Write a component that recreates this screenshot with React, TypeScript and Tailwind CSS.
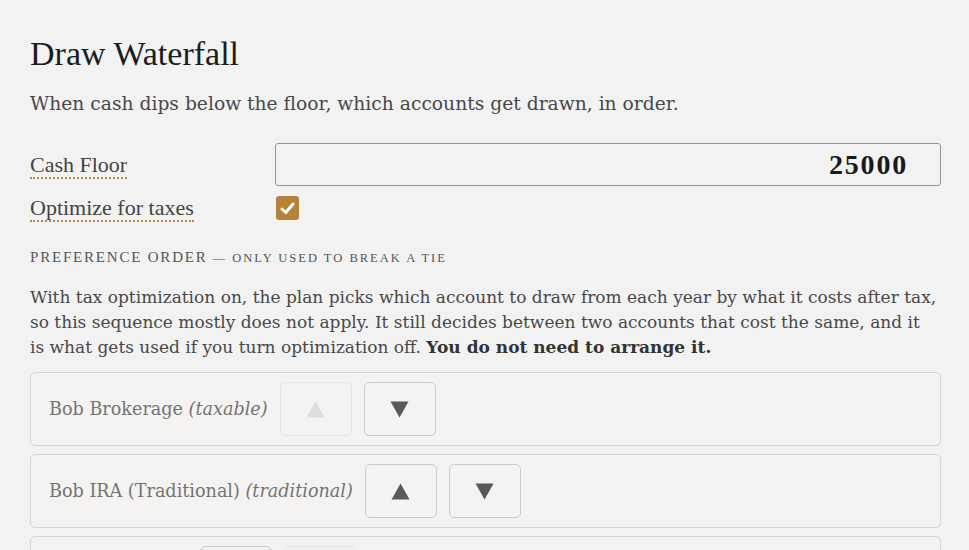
import React from "react";

const TITLE = '"Liberation Serif", "Times New Roman", serif';
const BODY = '"DejaVu Serif", "Liberation Serif", serif';

function Tri({ up, disabled }: { up?: boolean; disabled?: boolean }) {
  return (
    <svg width="19" height="17" viewBox="0 0 19 17">
      <polygon
        points={up ? "9.5,0.5 18.5,16.5 0.5,16.5" : "0.5,0.5 18.5,0.5 9.5,16.5"}
        fill={disabled ? "#dedddc" : "#595959"}
      />
    </svg>
  );
}

function Btn({ up, disabled }: { up?: boolean; disabled?: boolean }) {
  return (
    <button
      className={
        "flex h-[54px] w-[72px] shrink-0 items-center justify-center rounded-[5px] border bg-transparent " +
        (disabled ? "border-[#e6e5e4]" : "border-[#cbcac9]")
      }
    >
      <Tri up={up} disabled={disabled} />
    </button>
  );
}

const items = [
  { name: "Bob Brokerage", kind: "taxable" },
  { name: "Bob IRA (Traditional)", kind: "traditional" },
  { name: "Bob Roth", kind: "roth" },
];

export default function App() {
  return (
    <div className="min-h-screen bg-[#f2f2f2] pl-[30px] pr-[28px] pt-[34px] pb-10">
      <h1
        className="text-[34px] leading-[40px] text-[#1c1c1c]"
        style={{ fontFamily: TITLE }}
      >
        Draw Waterfall
      </h1>
      <p
        className="mt-[16px] text-[18.7px] leading-[28px] text-[#484848]"
        style={{ fontFamily: BODY }}
      >
        When cash dips below the floor, which accounts get drawn, in order.
      </p>

      <div className="mt-[25px] grid grid-cols-[245px_1fr] items-center">
        <div className="text-[22px] leading-[33px] text-[#444]" style={{ fontFamily: TITLE }}>
          <span className="border-b-2 border-dotted border-[#b8873c]">Cash Floor</span>
        </div>
        <div className="flex h-[43px] items-center justify-end rounded-[3px] border border-[#959595] pr-[32px]">
          <span
            className="text-[28px] font-bold tracking-[1.8px] text-[#1a1a1a]"
            style={{ fontFamily: TITLE }}
          >
            25000
          </span>
        </div>
        <div
          className="mt-[10px] text-[22px] leading-[24px] text-[#444]"
          style={{ fontFamily: TITLE }}
        >
          <span className="border-b-2 border-dotted border-[#b8873c]">Optimize for taxes</span>
        </div>
        <div className="mt-[10px] flex">
          <div className="ml-[1px] flex h-[24px] w-[23px] items-center justify-center rounded-[3px] bg-[#b5823a]">
            <svg width="15" height="13" viewBox="0 0 15 13">
              <polyline
                points="2,7 5.8,10.5 13,2"
                fill="none"
                stroke="#fff"
                strokeWidth="3"
                strokeLinecap="round"
                strokeLinejoin="round"
              />
            </svg>
          </div>
        </div>
      </div>

      <div
        className="mt-[27px] flex items-baseline leading-[20px] text-[#555]"
        style={{ fontFamily: TITLE }}
      >
        <span className="text-[15px] tracking-[1.8px]">PREFERENCE ORDER</span>
        <span className="ml-[5px] text-[12.5px] tracking-[2px]">— ONLY USED TO BREAK A TIE</span>
      </div>

      <p
        className="mt-[17px] text-[17px] leading-[25px] text-[#484848]"
        style={{ fontFamily: BODY }}
      >
        With tax optimization on, the plan picks which account to draw from each year by what it
        costs after tax,
        <br />
        so this sequence mostly does not apply. It still decides between two accounts that cost
        the same, and it
        <br />
        is what gets used if you turn optimization off.{" "}
        <b className="text-[#333]">You do not need to arrange it.</b>
      </p>

      <div className="mt-[12px] flex flex-col gap-[8px]">
        {items.map((it, i) => (
          <div
            key={it.name}
            className="flex items-center gap-3 rounded-[5px] border border-[#d6d5d4] bg-[#f4f3f2] px-[18px] py-[9px]"
          >
            <span
              className="text-[17.6px] text-[#737373]"
              style={{ fontFamily: BODY }}
            >
              {it.name} <i>({it.kind})</i>
            </span>
            <Btn up disabled={i === 0} />
            <Btn disabled={i === items.length - 1} />
          </div>
        ))}
      </div>
    </div>
  );
}
